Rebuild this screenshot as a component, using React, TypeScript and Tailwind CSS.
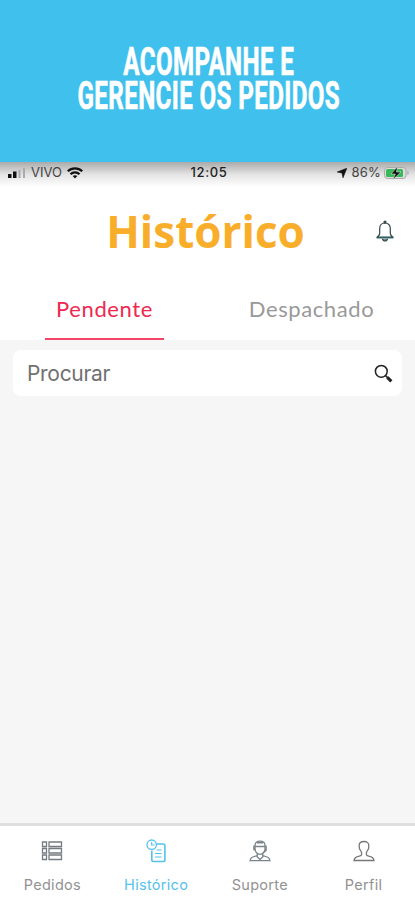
import React, { useState } from 'react';

const BellIcon = () => (
  <svg width="20" height="24" viewBox="0 0 20 24" fill="none" stroke="#35494c" strokeWidth="1.2">
    <circle cx="10" cy="2.2" r="1" fill="#35494c" />
    <path d="M10 3C6.800 3 4.700 5.200 4.700 8.600V13c0 2-1.200 3.400-2.900 4.200h16.400c-1.700-.8-2.900-2.200-2.900-4.200V8.600C15.300 5.200 13.200 3 10 3Z" />
    <path d="M1.500 17.700h17" stroke="#2c6163" strokeWidth="1.500" />
    <path d="M7.500 18.700c.2 1.600 1.200 2.300 2.500 2.300s2.300-.7 2.500-2.300" fill="#719194" />
  </svg>
);

const SearchIcon = () => (
  <svg width="19" height="19" viewBox="0 0 19 19" fill="none" stroke="#222">
    <circle cx="7.300" cy="7.300" r="5.900" strokeWidth="1.500" />
    <path d="m11.600 11.600 2 2" strokeWidth="1.500" />
    <path d="m13.300 13.300 4 4" strokeWidth="3.200" />
  </svg>
);

const OrdersIcon = () => (
  <svg width="22" height="22" viewBox="0 0 22 22" fill="none" stroke="#747b81" strokeWidth="1.300">
    <path d="M1.500 2h4v4.500h-4zM8 2h12.500v4.500H8zM1.500 8.500h4V13h-4zM8 8.500h12.500V13H8zM1.500 15h4v4.500h-4zM8 15h12.500v4.500H8z" />
  </svg>
);

const HistoryIcon = () => (
  <svg width="22" height="24" viewBox="0 0 22 24" fill="none" stroke="#55c1ec" strokeWidth="1.600">
    <path d="M12 5h6.200c1 0 1.700.7 1.700 1.700v14.100c0 1-.7 1.700-1.700 1.700H8.500c-1 0-1.700-.7-1.700-1.700V11.500" />
    <circle cx="6.700" cy="5.700" r="4.700" strokeWidth="1.300" />
    <path d="M6.700 3v3h2.800" strokeWidth="1.200" />
    <path d="M11.500 11h5M10 14.500h6.500M10 18h6.500" strokeWidth="1.100" />
  </svg>
);

const SupportIcon = () => (
  <svg width="22" height="22" viewBox="0 0 22 22" fill="none" stroke="#7b8589" strokeWidth="1.300">
    <path d="M6 9V5.500C6 2.800 8 1.200 11 1.200s5 1.600 5 4.300V9c0 3-2.300 5.300-5 5.300S6 12 6 9Z" />
    <path d="M6 6.500h10M5 5.500v4h1.500M17 5.500v5l-3 2.500M8 2.800h6" strokeWidth="1.600" />
    <path d="M8.300 13.500v2L3.800 17C2.200 17.600 1.200 18.900 1 20.700h20c-.2-1.800-1.200-3.100-2.800-3.700l-4.500-1.500v-2" />
    <path d="m7.500 16 3.500 3.500 3.500-3.500" />
  </svg>
);

const ProfileIcon = () => (
  <svg width="22" height="22" viewBox="0 0 22 22" fill="none" stroke="#777" strokeWidth="1.300">
    <path d="M11 1.500c-3.200 0-4.800 1.700-4.800 4 0 1 .3 1.500.1 2.300-.1 1 .5 1.500.9 2.100.4 1.100 1.400 1.600 1.400 2.900v1.600c0 .9-1 1.400-2.300 1.700-3.200.7-5.100 1.800-5.300 4.400h20c-.2-2.600-2.100-3.700-5.300-4.400-1.300-.3-2.300-.8-2.300-1.700v-1.600c0-1.300 1-1.800 1.400-2.900.4-.6 1-1.100.9-2.100-.2-.8.1-1.300.1-2.300 0-2.300-1.600-4-4.800-4Z" />
  </svg>
);

const StatusBar = () => (
  <div className="flex h-[25px] shrink-0 items-center justify-between bg-gradient-to-b from-[#aaa] via-[#e4e4e4] to-white pr-[5px] pb-[3px] pl-2 font-['Inter',sans-serif] text-[13px] text-[#444]">
    <div className="flex w-[150px] items-center">
      <svg width="18" height="10" viewBox="0 0 18 10">
        <path d="M0 6h3.500v4H0zM5 3.500h3.500V10H5z" fill="#111" />
        <path d="M10.500 2h2v8h-2zM15 0h2v10h-2z" fill="#aaa" />
      </svg>
      <span className="ml-[5px]">VIVO</span>
      <svg className="ml-[5px]" width="16" height="12" viewBox="0 0 16 12" fill="none" stroke="#111" strokeWidth="2.300">
        <path d="M.8 4.300c4-4 10.400-4 14.400 0M3.500 7.200c2.500-2.500 6.500-2.500 9 0" />
        <path d="m8 11.500-2.300-2.400c1.300-1.200 3.300-1.200 4.600 0Z" fill="#111" stroke="none" />
      </svg>
    </div>
    <span className="text-[13px] font-medium tracking-[0.600px] text-[#222]">12:05</span>
    <div className="flex w-[150px] items-center justify-end">
      <svg width="10" height="10" viewBox="0 0 10 10">
        <path d="M9.800.2 6 9.800 5 5 .2 4Z" fill="#111" stroke="#111" strokeWidth=".6" />
      </svg>
      <span className="mr-[3px] ml-[5px] tracking-[0.200px]">86%</span>
      <svg width="26" height="14" viewBox="0 0 26 14">
        <rect x=".5" y="1.500" width="21.500" height="11" rx="3" fill="#ddd" stroke="#aaa" />
        <rect x="2" y="3" width="17" height="8" rx="1.500" fill="#36b958" />
        <path d="M23.500 5c1.500.5 1.500 3.500 0 4Z" fill="#999" />
        <path d="M13.500.5 7 8h4.300L9 13.500 17 6h-4.500Z" fill="#111" stroke="#ddd" strokeWidth=".6" />
      </svg>
    </div>
  </div>
);

const TABS = [
  { id: 'pendente', label: 'Pendente' },
  { id: 'despachado', label: 'Despachado' },
];

const NAV_ITEMS = [
  { label: 'Pedidos', icon: <OrdersIcon /> },
  { label: 'Histórico', icon: <HistoryIcon /> },
  { label: 'Suporte', icon: <SupportIcon /> },
  { label: 'Perfil', icon: <ProfileIcon /> },
];

const App: React.FC = () => {
  const [tab, setTab] = useState('pendente');
  const [page, setPage] = useState('Histórico');
  const [search, setSearch] = useState('');

  return (
    <div className="flex h-[900px] w-[415px] flex-col overflow-hidden bg-white">
      <div className="flex h-[162px] shrink-0 justify-center bg-[#40c0ec] pt-[45px] pl-[2px]">
        <p className="scale-x-[0.620] text-center font-['Roboto',sans-serif] text-[39px] leading-[34px] font-bold tracking-[0.600px] whitespace-nowrap text-white [-webkit-text-stroke:0.700px_white]">
          ACOMPANHE E
          <br />
          GERENCIE OS PEDIDOS
        </p>
      </div>

      <StatusBar />

      <header className="grid h-[93px] shrink-0 grid-cols-[60px_1fr_60px] items-center pb-[5px]">
        <h1 className="col-start-2 -ml-1 text-center font-['Open_Sans',sans-serif] text-[44px] leading-[60px] font-bold text-[#f9ae2b]">
          Histórico
        </h1>
        <button type="button" className="flex justify-center pt-[2px]">
          <BellIcon />
        </button>
      </header>

      <div className="grid h-[60px] shrink-0 grid-cols-2 pl-px">
        {TABS.map((t) => (
          <button
            key={t.id}
            type="button"
            onClick={() => setTab(t.id)}
            className={`mx-auto border-b-2 px-[11px] pb-[2px] font-["Lato",sans-serif] text-[22px] tracking-[0.600px] ${
              tab === t.id ? 'border-[#f14667] text-[#ee284f]' : 'border-transparent text-[#999]'
            }`}
          >
            {t.label}
          </button>
        ))}
      </div>

      <main className="flex-1 bg-[#f6f6f6] px-[13px] pt-[10px]">
        <label className="flex h-[46px] items-center rounded-lg bg-white pr-[9px] pl-[14px]">
          <input
            type="text"
            value={search}
            onChange={(e) => setSearch(e.target.value)}
            className="min-w-0 flex-1 pt-[2px] font-['Inter',sans-serif] text-[21px] tracking-[-0.300px] text-[#666] outline-none placeholder:text-[#707070]"
            placeholder="Procurar"
          />
          <SearchIcon />
        </label>
      </main>

      <nav className="grid h-[77px] shrink-0 grid-cols-4 border-t-[3px] border-[#dfdfdf] bg-white">
        {NAV_ITEMS.map((item) => (
          <button
            key={item.label}
            type="button"
            onClick={() => setPage(item.label)}
            className={`flex flex-col items-center pt-[13px] pl-px font-['Inter',sans-serif] text-[14.500px] ${
              page === item.label ? 'text-[#55c1ec]' : 'text-[#929292]'
            }`}
          >
            <span className="flex h-6 items-center">{item.icon}</span>
            <span className="mt-3 leading-5 tracking-[0.300px]">{item.label}</span>
          </button>
        ))}
      </nav>
    </div>
  );
};

export default App;
